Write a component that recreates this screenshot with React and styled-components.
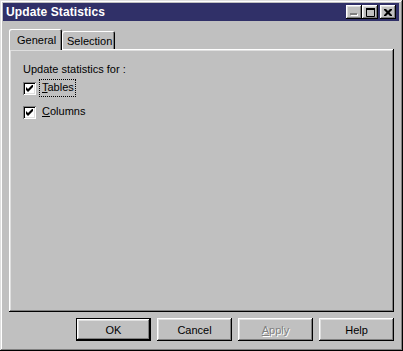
import { useState } from 'react'
import styled, { createGlobalStyle } from 'styled-components'

const GlobalStyle = createGlobalStyle`
    html, body {
        margin: 0;
        padding: 0;
        background: #c0c0c0;
    }
    body {
        font-family: "Liberation Sans", Arial, sans-serif;
        font-size: 11px;
        color: #000;
    }
`

export default function App() {
    const [tab, setTab] = useState('general');
    const [tables, setTables] = useState(true);
    const [columns, setColumns] = useState(true);

    return (
        <>
            <GlobalStyle />
            <Window>
                <TitleBar>
                    <Title>Update Statistics</Title>
                    <TitleButtons>
                        <TitleButton disabled>
                            <svg width="8" height="3" viewBox="0 0 8 3">
                                <rect x="1" y="1" width="7" height="2" fill="#fff" />
                                <rect x="0" y="0" width="7" height="2" fill="#808080" />
                            </svg>
                        </TitleButton>
                        <TitleButton>
                            <svg width="9" height="9" viewBox="0 0 9 9">
                                <path d="M0.5 0.5h8v8h-8z" fill="none" stroke="#000" />
                                <rect x="0" y="0" width="9" height="2" fill="#000" />
                            </svg>
                        </TitleButton>
                        <TitleButton $gap>
                            <svg width="8" height="7" viewBox="0 0 8 7">
                                <path d="M0 0h2l2 2 2-2h2v1l-2.5 2.5 2.5 2.5v1h-2l-2-2-2 2h-2v-1l2.5-2.5-2.5-2.5z" fill="#000" />
                            </svg>
                        </TitleButton>
                    </TitleButtons>
                </TitleBar>
                <Body>
                    <TabStrip>
                        <Tab $active={tab === 'general'} onClick={() => setTab('general')}>General</Tab>
                        <Tab $active={tab === 'selection'} onClick={() => setTab('selection')}>Selection</Tab>
                    </TabStrip>
                    <Panel>
                        <Caption>Update statistics for :</Caption>
                        <CheckRow onClick={() => setTables(!tables)}>
                            <CheckBox>{tables && <CheckMark />}</CheckBox>
                            <CheckLabel $focused><u>T</u>ables</CheckLabel>
                        </CheckRow>
                        <CheckRow onClick={() => setColumns(!columns)}>
                            <CheckBox>{columns && <CheckMark />}</CheckBox>
                            <CheckLabel><u>C</u>olumns</CheckLabel>
                        </CheckRow>
                    </Panel>
                    <Footer>
                        <Button $default>OK</Button>
                        <Button>Cancel</Button>
                        <Button disabled><u>A</u>pply</Button>
                        <Button>Help</Button>
                    </Footer>
                </Body>
            </Window>
        </>
    )
}

function CheckMark() {
    return (
        <svg width="7" height="7" viewBox="0 0 7 7">
            <path d="M0 2v3l2 2 5-5v-3l-5 5z" fill="#000" />
        </svg>
    )
}

const Window = styled.div`
    width: 403px;
    height: 351px;
    box-sizing: border-box;
    padding: 3px 4px 4px 3px;
    background: #c0c0c0;
    box-shadow: inset -1px -1px #000, inset 1px 1px #dfdfdf, inset -2px -2px #808080, inset 2px 2px #fff;
    display: flex;
    flex-direction: column;
`

const TitleBar = styled.div`
    height: 18px;
    background: #303068;
    display: flex;
    align-items: center;
    justify-content: space-between;
    padding: 0 3px 0 3px;
`

const Title = styled.div`
    color: #fff;
    font-weight: bold;
    font-size: 12px;
    letter-spacing: 0.1px;
`

const TitleButtons = styled.div`
    display: flex;
    align-items: center;
`

const TitleButton = styled.button`
    width: 16px;
    height: 14px;
    padding: 0;
    border: none;
    margin-left: ${p => (p.$gap ? '2px' : '0')};
    background: #c0c0c0;
    box-shadow: inset -1px -1px #000, inset 1px 1px #fff, inset -2px -2px #808080, inset 2px 2px #dfdfdf;
    display: flex;
    align-items: center;
    justify-content: center;
    & svg {
        display: block;
        margin-top: ${p => (p.disabled ? '5px' : '0')};
        margin-left: ${p => (p.disabled ? '-1px' : '0')};
    }
`

const Body = styled.div`
    flex: 1;
    display: flex;
    flex-direction: column;
    padding: 8px 5px 0 6px;
`

const TabStrip = styled.div`
    display: flex;
    align-items: flex-end;
    height: 20px;
    position: relative;
    z-index: 1;
`

const Tab = styled.div`
    height: ${p => (p.$active ? '21px' : '18px')};
    margin-bottom: ${p => (p.$active ? '-1px' : '0')};
    box-sizing: border-box;
    padding: ${p => (p.$active ? '5px 7px 0 8px' : '4px 6px 0 5px')};
    width: 53px;
    background: #c0c0c0;
    border-top-left-radius: 2px;
    border-top-right-radius: 2px;
    box-shadow: inset 1px 1px #fff, inset -1px 0 #000, inset -2px 0 #808080;
    cursor: default;
    white-space: nowrap;
`

const Panel = styled.div`
    height: 263px;
    box-sizing: border-box;
    padding: 14px 14px;
    box-shadow: inset -1px -1px #000, inset 1px 1px #fff, inset -2px -2px #808080, inset 2px 2px #dfdfdf;
`

const Caption = styled.div`
    line-height: 13px;
    margin-bottom: 4px;
`

const CheckRow = styled.div`
    display: flex;
    align-items: center;
    gap: 4px;
    height: 16px;
    margin-bottom: 8px;
    cursor: default;
`

const CheckBox = styled.div`
    width: 13px;
    height: 13px;
    box-sizing: border-box;
    background: #fff;
    box-shadow: inset 1px 1px #808080, inset -1px -1px #fff, inset 2px 2px #000, inset -2px -2px #dfdfdf;
    display: flex;
    align-items: center;
    justify-content: center;
    & svg {
        display: block;
    }
`

const CheckLabel = styled.div`
    padding: 1px 1px 2px 2px;
    line-height: 13px;
    outline: ${p => (p.$focused ? '1px dotted #000' : 'none')};
`

const Footer = styled.div`
    display: flex;
    justify-content: flex-end;
    gap: 6px;
    padding-top: 6px;
`

const Button = styled.button`
    width: 75px;
    height: 23px;
    padding: 0;
    border: none;
    font-family: "Liberation Sans", Arial, sans-serif;
    font-size: 11px;
    color: ${p => (p.disabled ? '#808080' : '#000')};
    text-shadow: ${p => (p.disabled ? '1px 1px #fff' : 'none')};
    background: #c0c0c0;
    box-shadow: ${p => (p.$default
        ? 'inset 0 0 0 1px #000, inset -2px -2px #000, inset 2px 2px #fff, inset -3px -3px #808080, inset 3px 3px #dfdfdf'
        : 'inset -1px -1px #000, inset 1px 1px #fff, inset -2px -2px #808080, inset 2px 2px #dfdfdf')};
    & u {
        text-decoration: underline;
    }
`
